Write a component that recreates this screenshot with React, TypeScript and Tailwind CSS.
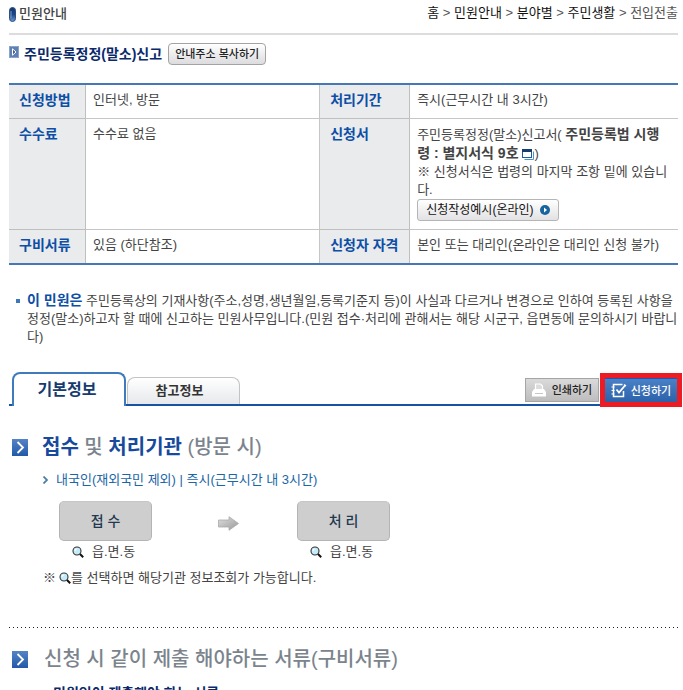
import type { ReactNode } from "react";

const crumbs = ["홈", "민원안내", "분야별", "주민생활"];

function ArrowSquare() {
  return (
    <svg width="16" height="17" viewBox="0 0 16 17" aria-hidden="true" className="shrink-0">
      <defs>
        <linearGradient id="square-fill" x1="0" y1="0" x2="0" y2="1">
          <stop offset="0" stopColor="#5584c6" />
          <stop offset="1" stopColor="#2259a8" />
        </linearGradient>
      </defs>
      <rect width="16" height="17" fill="url(#square-fill)" />
      <path d="M5.500 3l5.500 5.500-5.500 5.500" fill="none" stroke="#fff" strokeWidth="1.800" />
    </svg>
  );
}

function TitleIcon() {
  return (
    <svg width="10" height="12" viewBox="0 0 10 12" aria-hidden="true" className="mt-[3px] shrink-0 self-start">
      <rect x="0.5" y="0.5" width="9" height="11" fill="#5f80b2" stroke="#8ba3c8" />
      <path d="M3.500 2.800l3.500 3.200-3.500 3.200z" fill="#3c5f98" stroke="#fff" strokeWidth="1" />
    </svg>
  );
}

function Pill() {
  return (
    <svg width="7" height="15" viewBox="0 0 7 15" aria-hidden="true" className="shrink-0">
      <defs>
        <linearGradient id="pill-fill" x1="0" y1="0" x2="0" y2="1">
          <stop offset="0" stopColor="#16356f" />
          <stop offset="0.5" stopColor="#1d4684" />
          <stop offset="1" stopColor="#6d9bd0" />
        </linearGradient>
      </defs>
      <rect x="0.5" y="0.5" width="6" height="14" rx="3" fill="url(#pill-fill)" stroke="#294e88" />
      <path d="M2 4v7" stroke="#7c9fd0" strokeWidth="1" />
    </svg>
  );
}

function Magnifier() {
  return (
    <svg width="12" height="12" viewBox="0 0 12 12" aria-hidden="true" className="inline-block shrink-0">
      <circle cx="5" cy="5" r="4" fill="#c4ebf8" stroke="#333" strokeWidth="1.1" />
      <path d="M3 5a2 2 0 0 1 2-2" fill="none" stroke="#fff" strokeWidth="1.2" />
      <path d="M8 8l3.2 3.2" stroke="#111" strokeWidth="2" />
    </svg>
  );
}

function NewWindow() {
  return (
    <svg width="12" height="11" viewBox="0 0 12 11" aria-hidden="true" className="inline-block">
      <path d="M2.500 10.500h9V2.500" fill="none" stroke="#4a93cf" strokeWidth="1" />
      <rect x="0.5" y="0.5" width="9" height="8" fill="#fff" stroke="#1f5c99" />
      <rect x="0" y="0" width="10" height="3" fill="#173d6d" />
    </svg>
  );
}

function PlayDot() {
  return (
    <svg width="10" height="10" viewBox="0 0 10 10" aria-hidden="true">
      <circle cx="5" cy="5" r="5" fill="#17649f" />
      <path d="M4 2.500L7 5 4 7.500z" fill="#fff" />
    </svg>
  );
}

function Printer() {
  return (
    <svg width="14" height="15" viewBox="0 0 14 15" aria-hidden="true">
      <path d="M3.500 6V1h5l2 2v3" fill="#dcdcdc" stroke="#fff" strokeWidth="1.200" />
      <path d="M2 6h10l2 3v4.500H0V9z" fill="#fff" />
      <path d="M3 10.500h8" stroke="#c8c8c8" />
    </svg>
  );
}

function NoteCheck() {
  return (
    <svg width="16" height="15" viewBox="0 0 16 15" fill="none" stroke="#fff" aria-hidden="true">
      <path d="M12.500 8v5.500h-10V1.500h9" strokeWidth="1.500" />
      <path d="M0.500 4h3M0.500 7.500h3M0.500 11h3" strokeWidth="1.200" />
      <path d="M5.500 6.500l2.500 3 6-7" strokeWidth="1.800" />
      <path d="M13 1.500l2 1.500" strokeWidth="1.500" />
    </svg>
  );
}

function Th({ children, last }: { children: ReactNode; last?: boolean }) {
  return (
    <th
      scope="row"
      className={`border-r border-[#bfbfbf] bg-[#e9ebed] pt-[6px] pl-[10px] text-left align-top text-sm leading-[18px] font-bold text-[#0d4ea6] ${last ? "" : "border-b"}`}
    >
      {children}
    </th>
  );
}

function Td({ children, edge, last }: { children: ReactNode; edge?: boolean; last?: boolean }) {
  return (
    <td
      className={`border-[#c6c6c6] pt-[6px] pr-2 pl-[7px] align-top ${edge ? "border-r" : ""} ${last ? "" : "border-b"}`}
    >
      {children}
    </td>
  );
}

function Step({ name }: { name: string }) {
  return (
    <li className="w-[93px]">
      <div className="flex h-10 items-center justify-center rounded-[5px] border border-[#b4b4b4] border-t-[#c6c6c6] bg-[#cecece] text-sm font-medium text-[#1f3950]">
        {name}
      </div>
      <a href="#office" className="mt-[2px] flex h-[18px] items-center gap-2 pl-[13px]">
        <Magnifier />
        읍.면.동
      </a>
    </li>
  );
}

export default function App() {
  return (
    <div className="h-screen overflow-hidden bg-white pr-[5px] pl-[9px] font-['Liberation_Sans','Noto_Sans_CJK_KR',sans-serif] text-[13px] leading-[18px] text-[#444]">
      <header className="flex h-[35px] items-start justify-between border-b-2 border-[#dcdcdc] pt-[5px]">
        <h1 className="flex items-center gap-[3px] font-medium">
          <Pill />
          민원안내
        </h1>
        <nav aria-label="위치" className="-mt-px text-[#111]">
          {crumbs.map((c) => (
            <span key={c}>
              <a href="#path">{c}</a> <span className="text-[#555]">&gt;</span>{" "}
            </span>
          ))}
          <span className="text-[#555]">전입전출</span>
        </nav>
      </header>

      <div className="mt-2 flex h-[22px] items-center">
        <TitleIcon />
        <h2 className="ml-[5px] text-sm leading-[18px] font-bold text-[#0b2a6b]">주민등록정정(말소)신고</h2>
        <button className="ml-[6px] h-[22px] rounded-[4px] border border-[#a3a3a3] bg-linear-to-b from-white to-[#dcdcdf] px-[6px] text-[11px] font-medium text-[#222]">
          안내주소 복사하기
        </button>
      </div>

      <div className="mt-[18px] border-y-2 border-[#4678b8]">
        <table className="w-full table-fixed border-separate border-spacing-0">
          <colgroup>
            <col className="w-[77px]" />
            <col className="w-[35%]" />
            <col className="w-[90px]" />
            <col />
          </colgroup>
          <tbody>
            <tr className="h-[34px]">
              <Th>신청방법</Th>
              <Td edge>인터넷, 방문</Td>
              <Th>처리기간</Th>
              <Td>즉시(근무시간 내 3시간)</Td>
            </tr>
            <tr className="h-[111px]">
              <Th>수수료</Th>
              <Td edge>수수료 없음</Td>
              <Th>신청서</Th>
              <Td>
                주민등록정정(말소)신고서({" "}
                <a href="#law" className="text-sm leading-[18px] font-bold">
                  주민등록법 시행령 : 별지서식 9호 <NewWindow />
                </a>
                )
                <br />※ 신청서식은 법령의 마지막 조항 밑에 있습니다.
                <button className="flex h-[22px] items-center gap-[6px] rounded-[3px] border border-[#b5b5b5] bg-linear-to-b from-white to-[#e2e2e4] px-2 text-xs text-[#111]">
                  신청작성예시(온라인)
                  <PlayDot />
                </button>
              </Td>
            </tr>
            <tr className="h-[33px]">
              <Th last>구비서류</Th>
              <Td edge last>있음 (하단참조)</Td>
              <Th last>신청자 자격</Th>
              <Td last>본인 또는 대리인(온라인은 대리인 신청 불가)</Td>
            </tr>
          </tbody>
        </table>
      </div>

      <div className="-mr-[3px] mt-[26px] flex pl-[7px]">
        <span className="mt-[8px] mr-[7px] size-1 shrink-0 bg-[#3a78b8]" />
        <p>
          <strong className="text-sm leading-[18px] font-bold text-[#0d4ea6]">이 민원은</strong>{" "}
          주민등록상의 기재사항(주소,성명,생년월일,등록기준지 등)이 사실과 다르거나 변경으로 인하여 등록된 사항을
          정정(말소)하고자 할 때에 신고하는 민원사무입니다.(민원 접수·처리에 관해서는 해당 시군구, 읍면동에
          문의하시기 바랍니다)
        </p>
      </div>

      <div className="mt-[26px] flex h-[34px] items-end border-b-2 border-[#1753a0] pl-[3px]">
        <button className="-mb-[2px] h-[34px] w-[114px] rounded-t-lg border-2 border-b-0 border-[#3f7abc] bg-white pr-1 text-base font-bold text-[#153b70]">
          기본정보
        </button>
        <button className="ml-px h-[27px] w-[113px] rounded-t-lg border border-b-0 border-[#c3c3c3] bg-linear-to-b from-white to-[#e6e8eb] pr-2 text-[13px] font-bold text-[#333]">
          참고정보
        </button>
        <div className="mr-px mb-[2px] ml-auto flex gap-[6px] text-[11px] font-medium">
          <button className="flex h-6 w-[74px] items-center justify-center gap-[6px] border border-[#a5a5a5] bg-linear-to-b from-[#dadada] to-[#bdbdbd] text-[#222]">
            <Printer />
            인쇄하기
          </button>
          <button className="flex h-6 w-[72px] items-center justify-center gap-1 border-t border-[#1559b8] bg-linear-to-b from-[#4a80c6] to-[#2c62a9] text-white outline-5 outline-[#ed1c24]">
            <NoteCheck />
            신청하기
          </button>
        </div>
      </div>

      <section className="pl-[3px]">
        <h3 className="mt-[29px] flex items-center gap-[14px] text-xl leading-6 font-medium text-[#7b848d]">
          <ArrowSquare />
          <span>
            <b className="text-[#174a9c]">접수</b> 및 <b className="text-[#174a9c]">처리기관</b> (방문 시)
          </span>
        </h3>
        <div className="pl-[31px]">
          <p className="mt-3 flex items-center gap-2 text-[#1a66a6]">
            <svg width="5" height="8" viewBox="0 0 5 8" fill="none" stroke="#4c7fa8" strokeWidth="1.800" aria-hidden="true">
              <path d="M0.500 0.500L4 4 0.500 7.500" />
            </svg>
            내국인(재외국민 제외) | 즉시(근무시간 내 3시간)
          </p>
          <ol className="mt-3 flex pl-4">
            <Step name="접 수" />
            <li aria-hidden="true" className="flex h-11 w-[145px] items-center justify-center pl-2">
              <svg width="21" height="15" viewBox="0 0 21 15">
                <defs>
                  <linearGradient id="step-arrow" x1="0" y1="0" x2="1" y2="1">
                    <stop offset="0" stopColor="#dedede" />
                    <stop offset="1" stopColor="#999" />
                  </linearGradient>
                </defs>
                <path d="M0.500 4H11V0.700L20.500 7.500 11 14.300V11H0.500z" fill="url(#step-arrow)" stroke="#aaa" strokeWidth="0.800" />
              </svg>
            </li>
            <Step name="처 리" />
          </ol>
          <p className="mt-2 flex items-center">
            ※<span className="ml-[3px] flex"><Magnifier /></span>를 선택하면 해당기관 정보조회가 가능합니다.
          </p>
        </div>
      </section>

      <div className="mt-10 h-px bg-[repeating-linear-gradient(90deg,#222_0_1px,transparent_1px_4px)]" />

      <section className="pl-[3px]">
        <h3 className="mt-[19px] flex items-center gap-4 text-xl leading-6 font-medium text-[#7b848d]">
          <ArrowSquare />
          신청 시 같이 제출 해야하는 서류(구비서류)
        </h3>
        <h4 className="mt-[13px] pl-[41px] text-sm leading-[18px] font-bold text-[#0b2a6b]">
          민원인이 제출해야 하는 서류
        </h4>
      </section>
    </div>
  );
}
